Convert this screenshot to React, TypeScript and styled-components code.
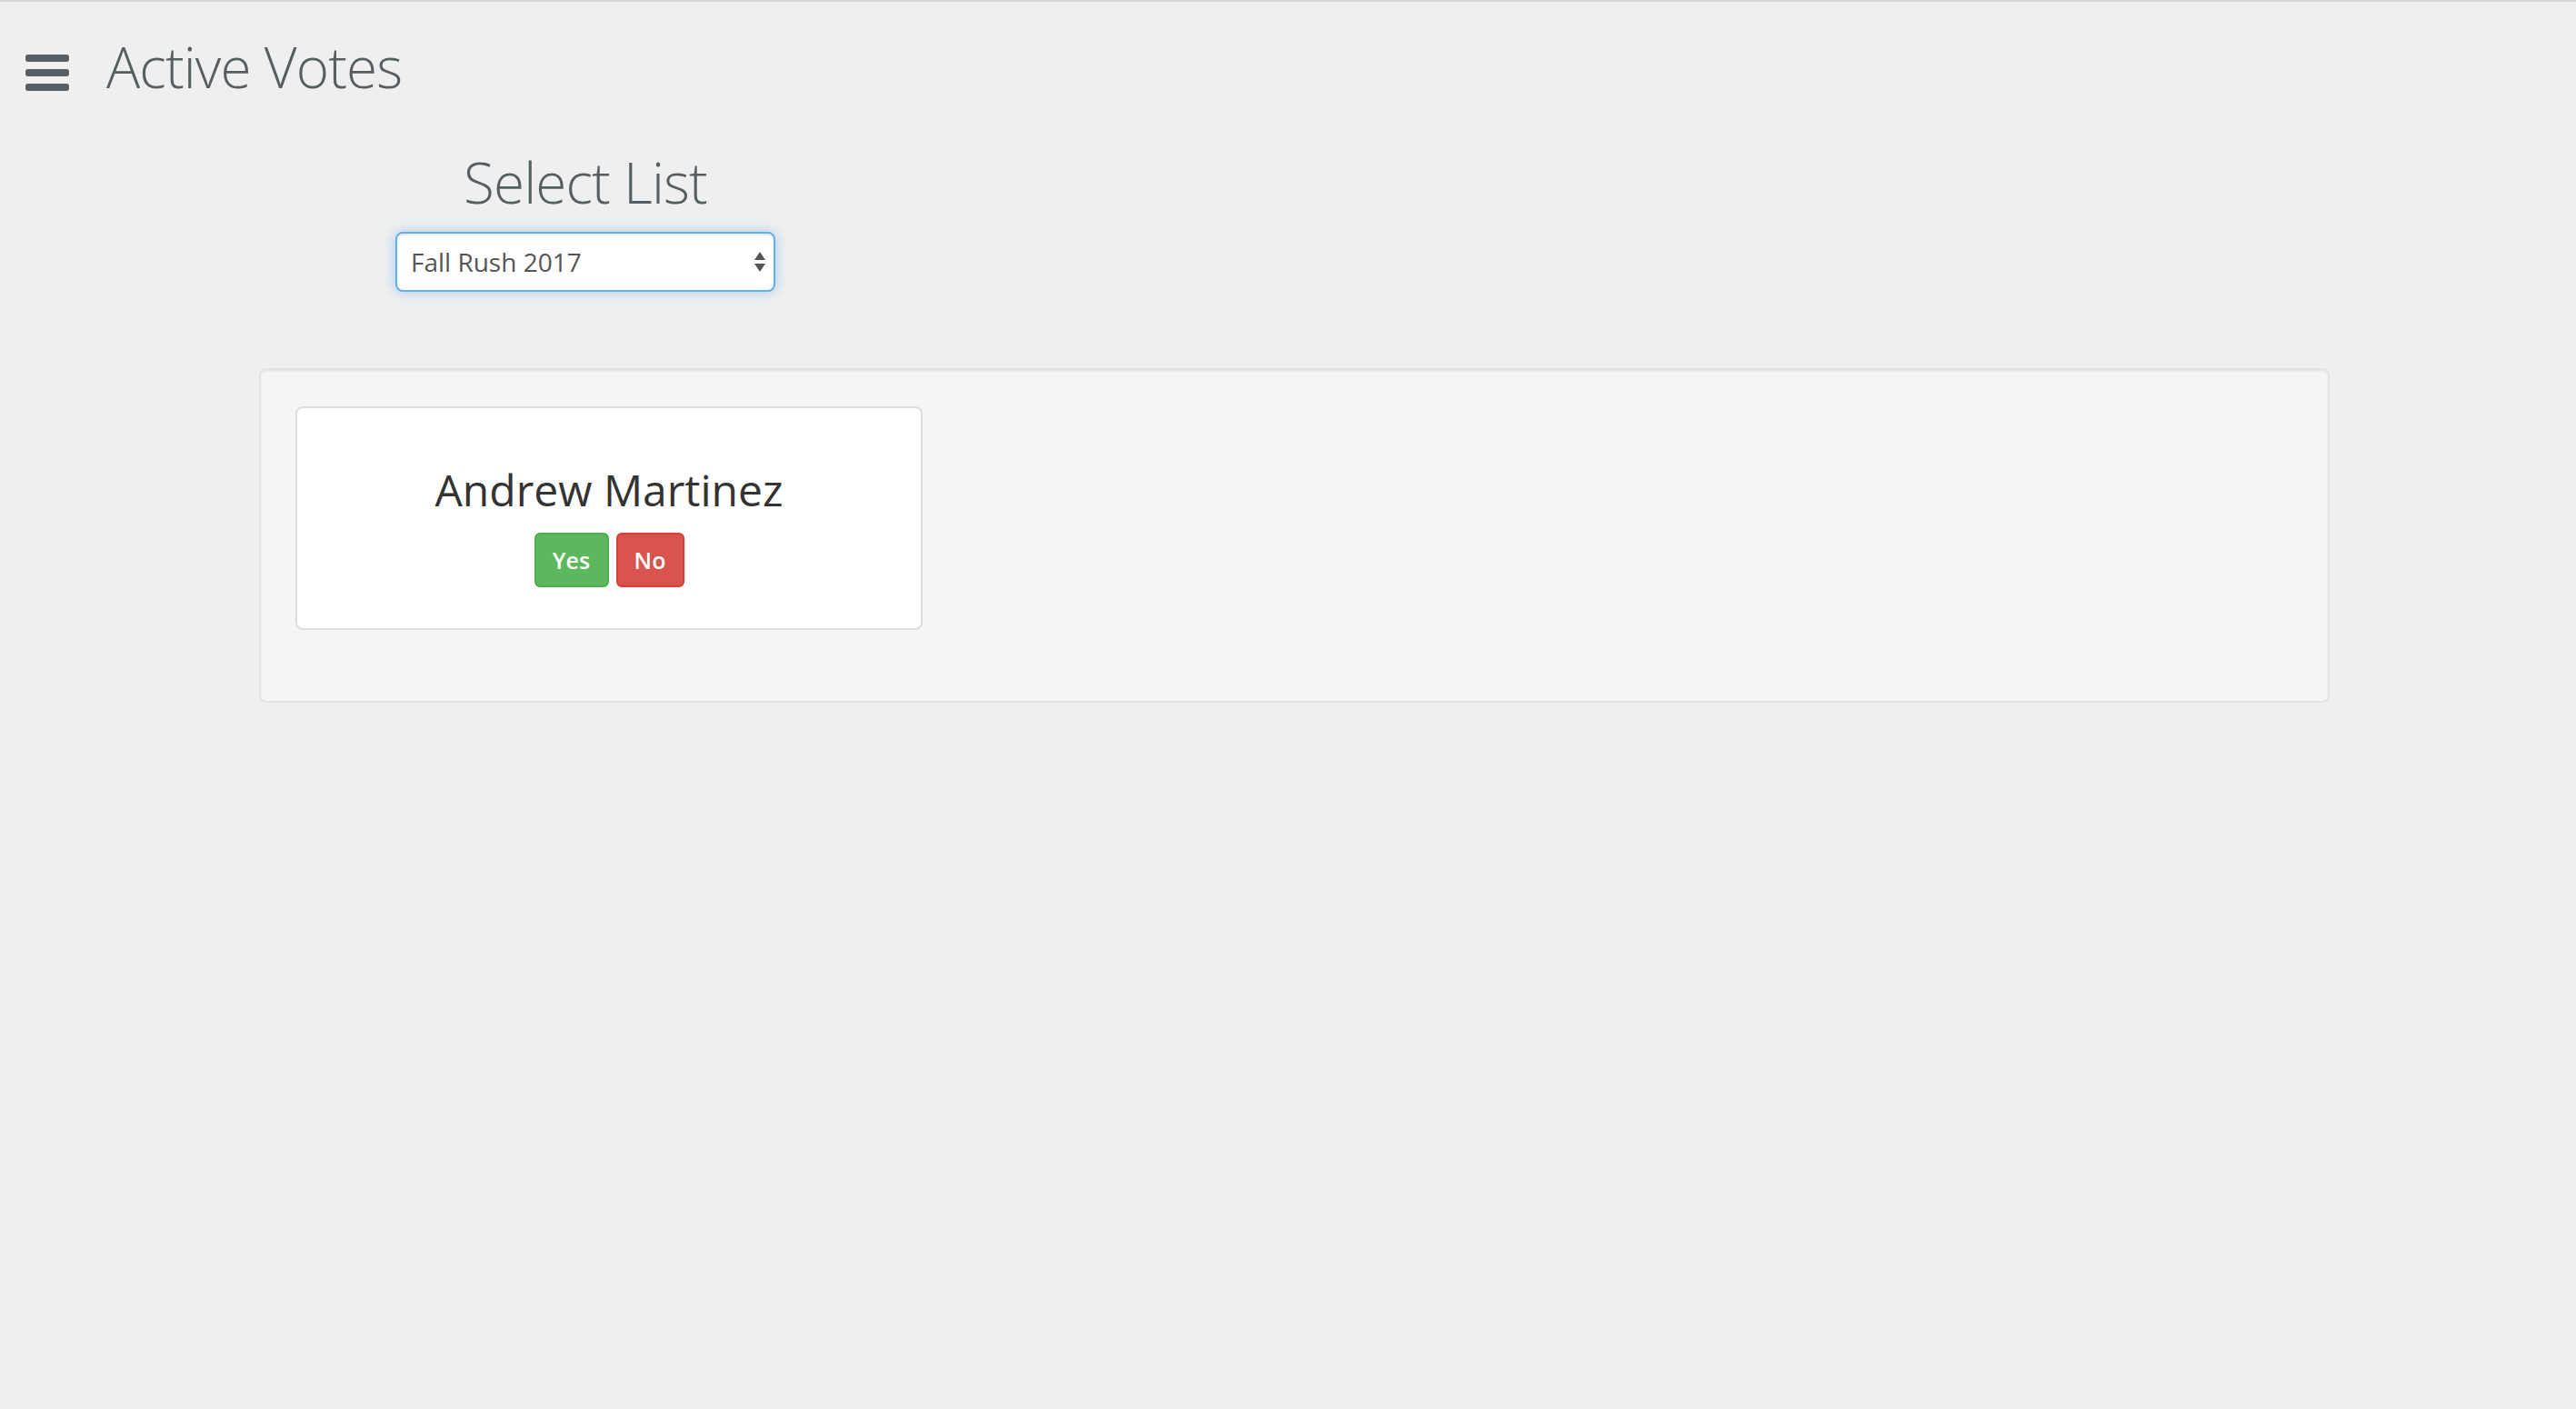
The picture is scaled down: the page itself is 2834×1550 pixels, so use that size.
import React from "react";
import styled, { createGlobalStyle } from "styled-components";

const GlobalStyle = createGlobalStyle`
  html, body {
    margin: 0;
    padding: 0;
    background: #efefef;
  }
  body {
    font-family: "Open Sans", "Liberation Sans", Arial, sans-serif;
    color: #333;
  }
  * { box-sizing: border-box; }
`;

const Page = styled.div`
  min-height: 1550px;
  border-top: 2px solid #d6d6d6;
  background: #efefef;
`;

const Header = styled.header`
  display: flex;
  align-items: flex-start;
  padding: 40px 0 0 28px;
`;

const MenuButton = styled.div`
  display: flex;
  flex-direction: column;
  gap: 8px;
  width: 48px;
  margin-top: 18px;
  cursor: pointer;
`;

const MenuBar = styled.span`
  display: block;
  height: 8px;
  border-radius: 3px;
  background: #565e61;
`;

const PageTitle = styled.h1`
  margin: 0 0 0 41px;
  font-size: 62px;
  line-height: 63px;
  font-weight: 300;
  letter-spacing: -0.9px;
  color: #565e61;
`;

const ListPicker = styled.section`
  display: flex;
  flex-direction: column;
  align-items: center;
  width: 418px;
  margin: 63px 0 0 435px;
`;

const SectionTitle = styled.h2`
  margin: 0;
  font-size: 62px;
  line-height: 64px;
  font-weight: 300;
  letter-spacing: -0.9px;
  color: #565e61;
  white-space: nowrap;
`;

const SelectBox = styled.div`
  display: flex;
  align-items: center;
  justify-content: space-between;
  width: 418px;
  height: 66px;
  margin-top: 23px;
  padding: 0 8px 0 15px;
  background: #fff;
  border: 2px solid #66afe9;
  border-radius: 8px;
  box-shadow: inset 0 2px 2px rgba(0, 0, 0, 0.075),
    0 0 14px rgba(102, 175, 233, 0.55);
  font-size: 28px;
  color: #555;
`;

const Arrows = styled.svg`
  width: 14px;
  height: 24px;
  flex: none;
`;

const Well = styled.div`
  margin: 84px 0 0 285px;
  width: 2278px;
  padding: 40px 38px 78px;
  background: #f5f5f5;
  border: 2px solid #e3e3e3;
  border-radius: 8px;
  box-shadow: inset 0 2px 2px rgba(0, 0, 0, 0.05);
`;

const VoteCard = styled.div`
  display: flex;
  flex-direction: column;
  align-items: center;
  width: 690px;
  height: 246px;
  padding-top: 63px;
  background: #fff;
  border: 2px solid #ddd;
  border-radius: 8px;
`;

const CandidateName = styled.h3`
  margin: 0;
  font-size: 48px;
  line-height: 54px;
  font-weight: 400;
  color: #333;
  white-space: nowrap;
`;

const ButtonRow = styled.div`
  display: flex;
  gap: 8px;
  margin-top: 20px;
`;

const VoteButton = styled.button<{ $variant: "yes" | "no" }>`
  display: flex;
  align-items: center;
  justify-content: center;
  width: ${(p) => (p.$variant === "yes" ? "82px" : "75px")};
  height: 60px;
  padding: 0;
  font-family: "Open Sans", "Liberation Sans", Arial, sans-serif;
  font-size: 25px;
  font-weight: 600;
  color: #fff;
  border-radius: 6px;
  border: 2px solid ${(p) => (p.$variant === "yes" ? "#4cae4c" : "#d43f3a")};
  background: ${(p) => (p.$variant === "yes" ? "#5cb85c" : "#d9534f")};
  cursor: pointer;
`;

export default function App() {
  return (
    <Page>
      <GlobalStyle />
      <Header>
        <MenuButton>
          <MenuBar />
          <MenuBar />
          <MenuBar />
        </MenuButton>
        <PageTitle>Active Votes</PageTitle>
      </Header>
      <ListPicker>
        <SectionTitle>Select List</SectionTitle>
        <SelectBox>
          <span>Fall Rush 2017</span>
          <Arrows viewBox="0 0 14 24">
            <path d="M1 10 L7 1 L13 10 Z" fill="#555" />
            <path d="M1 14 L7 23 L13 14 Z" fill="#555" />
          </Arrows>
        </SelectBox>
      </ListPicker>
      <Well>
        <VoteCard>
          <CandidateName>Andrew Martinez</CandidateName>
          <ButtonRow>
            <VoteButton $variant="yes">Yes</VoteButton>
            <VoteButton $variant="no">No</VoteButton>
          </ButtonRow>
        </VoteCard>
      </Well>
    </Page>
  );
}
